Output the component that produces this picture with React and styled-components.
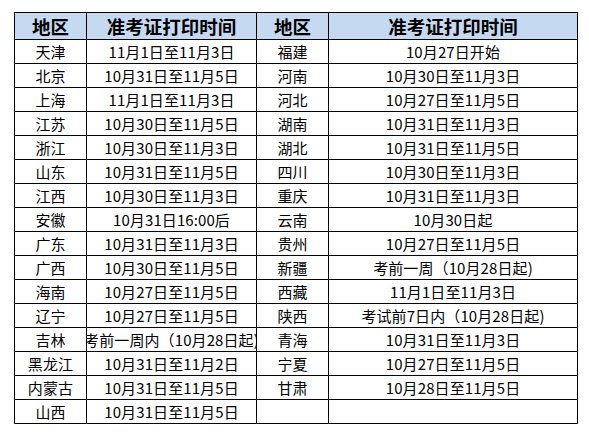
import styled, { createGlobalStyle } from "styled-components";

const GlobalStyle = createGlobalStyle`
  html, body {
    margin: 0;
    padding: 0;
    background: #ffffff;
  }
  body {
    font-family: "Noto Sans CJK SC", "Noto Sans", sans-serif;
    color: #000;
  }
`;

const Page = styled.div`
  padding: 12px 0 0 14px;
`;

const Table = styled.table`
  border-collapse: collapse;
  table-layout: fixed;
  width: 563px;
  border: 1.5px solid #000;
`;

const HeadCell = styled.th`
  height: 26px;
  padding: 0;
  background: #c5d9f1;
  border: 1px solid #000;
  font-size: 18.5px;
  font-weight: 700;
  line-height: 1;
  text-align: center;
`;

const Row = styled.tr`
  height: 24px;
`;

const Cell = styled.td`
  padding: 0;
  border: 1px solid #000;
  font-size: 15px;
  line-height: 1;
  overflow: hidden;
  white-space: nowrap;
`;

const CellInner = styled.div`
  display: flex;
  justify-content: center;
  white-space: nowrap;
  letter-spacing: 0.1px;
`;

const ROWS = [
  ["天津", "11月1日至11月3日", "福建", "10月27日开始"],
  ["北京", "10月31日至11月5日", "河南", "10月30日至11月3日"],
  ["上海", "11月1日至11月3日", "河北", "10月27日至11月5日"],
  ["江苏", "10月30日至11月5日", "湖南", "10月31日至11月3日"],
  ["浙江", "10月30日至11月3日", "湖北", "10月31日至11月5日"],
  ["山东", "10月31日至11月5日", "四川", "10月30日至11月3日"],
  ["江西", "10月30日至11月3日", "重庆", "10月31日至11月3日"],
  ["安徽", "10月31日16:00后", "云南", "10月30日起"],
  ["广东", "10月31日至11月3日", "贵州", "10月27日至11月5日"],
  ["广西", "10月30日至11月5日", "新疆", "考前一周（10月28日起)"],
  ["海南", "10月27日至11月5日", "西藏", "11月1日至11月3日"],
  ["辽宁", "10月27日至11月5日", "陕西", "考试前7日内（10月28日起)"],
  ["吉林", "考前一周内（10月28日起)", "青海", "10月31日至11月3日"],
  ["黑龙江", "10月31日至11月2日", "宁夏", "10月27日至11月5日"],
  ["内蒙古", "10月31日至11月5日", "甘肃", "10月28日至11月5日"],
  ["山西", "10月31日至11月5日", "", ""],
];

export default function App() {
  return (
    <>
      <GlobalStyle />
      <Page>
        <Table>
          <colgroup>
            <col style={{ width: 72 }} />
            <col style={{ width: 170 }} />
            <col style={{ width: 72 }} />
            <col style={{ width: 249 }} />
          </colgroup>
          <thead>
            <tr>
              <HeadCell>地区</HeadCell>
              <HeadCell>准考证打印时间</HeadCell>
              <HeadCell>地区</HeadCell>
              <HeadCell>准考证打印时间</HeadCell>
            </tr>
          </thead>
          <tbody>
            {ROWS.map((row, i) => (
              <Row key={i}>
                {row.map((text, j) => (
                  <Cell key={j}>
                    <CellInner>{text}</CellInner>
                  </Cell>
                ))}
              </Row>
            ))}
          </tbody>
        </Table>
      </Page>
    </>
  );
}
